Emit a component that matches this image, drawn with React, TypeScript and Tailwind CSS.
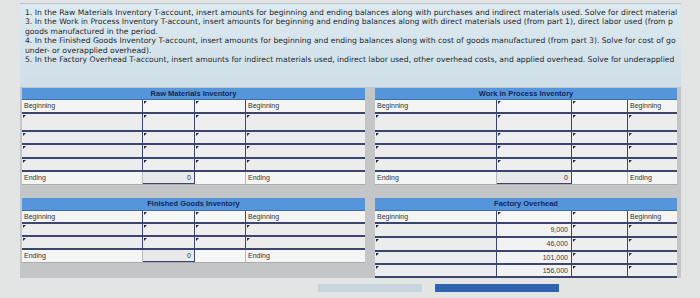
import React from "react";

const DARK = "border-[#3a4670]";

type RowKind = "label" | "input" | "ending" | "values";
interface Row {
  kind: RowKind;
  h: string;
  left?: string;
  right?: string;
  mid?: string;
}

function Marker() {
  return (
    <span className="absolute left-[1px] top-[1px] w-0 h-0 border-t-[3px] border-r-[3px] border-t-[#1b2750] border-r-transparent" />
  );
}

function TAccount({
  title,
  cols,
  rows,
  width,
  headH,
}: {
  title: string;
  cols: string[];
  rows: Row[];
  width: string;
  headH: string;
}) {
  return (
    <div className={`${width} flex flex-col`}>
      <div className={`${headH} bg-[#5595db] flex items-center justify-center text-[7.5px] font-bold text-[#16275a] font-['Liberation_Sans',Arial,sans-serif] border-b border-[#3f6fa8]`}>
        {title}
      </div>
      {rows.map((r, i) => {
        if (r.kind === "label") {
          return (
            <div key={i} className={`flex ${r.h} border-b-2 ${DARK}`}>
              <div className={`${cols[0]} bg-[#f4f4f3] border-r ${DARK} pl-[2px] text-[7px] text-[#333] leading-[12px]`}>{r.left}</div>
              <div className={`${cols[1]} relative bg-[#f6f6f6] border-r ${DARK}`}><Marker /></div>
              <div className={`${cols[2]} relative bg-[#f6f6f6] border-r ${DARK}`}><Marker /></div>
              <div className={`${cols[3]} bg-[#f4f4f3] pl-[2px] text-[7px] text-[#333] leading-[12px]`}>{r.right}</div>
            </div>
          );
        }
        if (r.kind === "input") {
          return (
            <div key={i} className={`flex ${r.h} border-b-2 ${DARK}`}>
              <div className={`${cols[0]} relative bg-[#ececec] border-r ${DARK}`}><Marker /></div>
              <div className={`${cols[1]} relative bg-[#eeeeee] border-r ${DARK}`}><Marker /></div>
              <div className={`${cols[2]} relative bg-[#eeeeee] border-r ${DARK}`}><Marker /></div>
              <div className={`${cols[3]} relative bg-[#ececec]`}><Marker /></div>
            </div>
          );
        }
        if (r.kind === "values") {
          return (
            <div key={i} className={`flex ${r.h} border-b-2 ${DARK}`}>
              <div className={`${cols[0]} relative bg-[#ececec] border-r ${DARK}`}><Marker /></div>
              <div className={`${cols[1]} bg-[#f2f2f2] border-r ${DARK} text-right pr-[3px] text-[7px] text-[#3a3a3a] leading-[12px]`}>{r.mid}</div>
              <div className={`${cols[2]} relative bg-[#eeeeee] border-r ${DARK}`}><Marker /></div>
              <div className={`${cols[3]} relative bg-[#ececec]`}><Marker /></div>
            </div>
          );
        }
        return (
          <div key={i} className={`flex ${r.h} border-b border-[#a9abad]`}>
            <div className={`${cols[0]} bg-[#f4f4f3] border-r border-[#b9bbbd] pl-[2px] text-[7px] text-[#333] leading-[12px]`}>{r.left}</div>
            <div className={`${cols[1]} bg-[#e9e9e9] border-r border-b ${DARK} text-right pr-[3px] text-[7px] text-[#333] leading-[12px]`}>{r.mid}</div>
            <div className={`${cols[2]} bg-[#f6f6f6] border-r border-[#b9bbbd]`} />
            <div className={`${cols[3]} bg-[#f4f4f3] pl-[2px] text-[7px] text-[#333] leading-[12px]`}>{r.right}</div>
          </div>
        );
      })}
    </div>
  );
}

const LEFT = ["w-[121px]", "w-[52px]", "w-[51px]", "w-[119px]"];
const RIGHT = ["w-[122px]", "w-[75px]", "w-[56px]", "w-[49px]"];

const topRows: Row[] = [
  { kind: "label", h: "h-[14px]", left: "Beginning", right: "Beginning" },
  { kind: "input", h: "h-[18px]" },
  { kind: "input", h: "h-[13px]" },
  { kind: "input", h: "h-[14px]" },
  { kind: "input", h: "h-[13px]" },
  { kind: "ending", h: "h-[13px]", left: "Ending", mid: "0", right: "Ending" },
];

const fgRows: Row[] = [
  { kind: "label", h: "h-[13px]", left: "Beginning", right: "Beginning" },
  { kind: "input", h: "h-[13px]" },
  { kind: "input", h: "h-[13px]" },
  { kind: "ending", h: "h-[13px]", left: "Ending", mid: "0", right: "Ending" },
];

const foRows: Row[] = [
  { kind: "label", h: "h-[13px]", left: "Beginning", right: "Beginning" },
  { kind: "values", h: "h-[14px]", mid: "9,000" },
  { kind: "values", h: "h-[14px]", mid: "46,000" },
  { kind: "values", h: "h-[13px]", mid: "101,000" },
  { kind: "values", h: "h-[13px]", mid: "156,000" },
];

const lines = [
  "1. In the Raw Materials Inventory T-account, insert amounts for beginning and ending balances along with purchases and indirect materials used. Solve for direct material",
  "3. In the Work in Process Inventory T-account, insert amounts for beginning and ending balances along with direct materials used (from part 1), direct labor used (from p",
  "goods manufactured in the period.",
  "4. In the Finished Goods Inventory T-account, insert amounts for beginning and ending balances along with cost of goods manufactured (from part 3). Solve for cost of go",
  "under- or overapplied overhead).",
  "5. In the Factory Overhead T-account, insert amounts for indirect materials used, indirect labor used, other overhead costs, and applied overhead. Solve for underapplied",
];

export default function App() {
  return (
    <div className="w-[700px] h-[298px] overflow-hidden bg-[#e3e5e5] flex flex-col font-['Liberation_Sans',Arial,sans-serif]">
      <div className="h-[3px]" />
      <div className="ml-[20px] w-[661px] h-[84px] bg-gradient-to-b from-[#dde9f0] to-[#cfdfe8] border-t border-[#b8c4cb] pl-[5px] pt-[4px] overflow-hidden">
        {lines.map((l, i) => (
          <div key={i} className="whitespace-nowrap text-[7.65px] leading-[9.4px] text-[#24282c] font-['DejaVu_Sans',Verdana,sans-serif]">
            {l}
          </div>
        ))}
      </div>
      <div className="ml-[20px] w-[661px] h-[191px] bg-[#c3c5c6] pt-[1px] pl-[2px] flex flex-col gap-[13px]">
        <div className="flex gap-[10px]">
          <TAccount title="Raw Materials Inventory" cols={LEFT} rows={topRows} width="w-[343px]" headH="h-[12px]" />
          <TAccount title="Work in Process Inventory" cols={RIGHT} rows={topRows} width="w-[302px]" headH="h-[12px]" />
        </div>
        <div className="flex gap-[10px]">
          <TAccount title="Finished Goods Inventory" cols={LEFT} rows={fgRows} width="w-[343px]" headH="h-[13px]" />
          <TAccount title="Factory Overhead" cols={RIGHT} rows={foRows} width="w-[302px]" headH="h-[13px]" />
        </div>
      </div>
      <div className="flex items-center h-[20px] pl-[318px] gap-[13px]">
        <div className="w-[104px] h-[8px] bg-[#c9d6e0]" />
        <div className="w-[124px] h-[8px] bg-[#2f64b0]" />
      </div>
    </div>
  );
}
